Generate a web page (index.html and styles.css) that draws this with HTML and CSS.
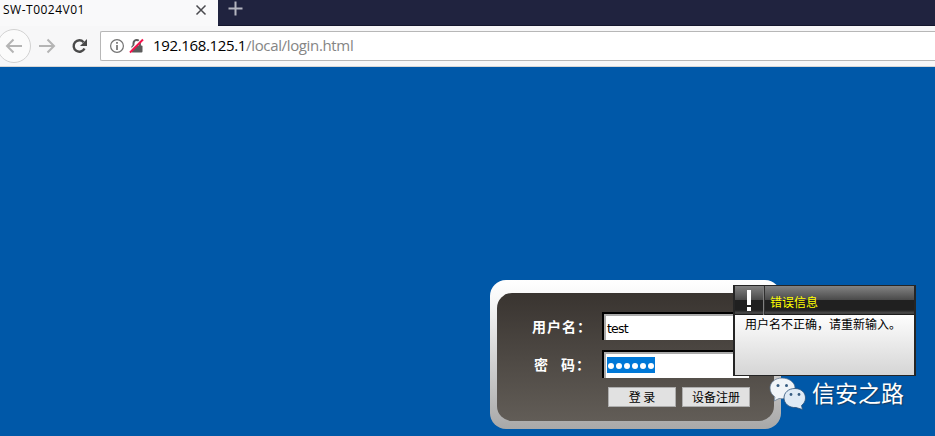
FILE: index.html
```html
<!DOCTYPE html>
<html lang="zh-CN">
<head>
<meta charset="utf-8">
<title>SW-T0024V01</title>
<link rel="stylesheet" href="styles.css">
</head>
<body>
<header class="tabs">
  <div class="tab"><span class="tab-title">SW-T0024V01</span>
    <svg class="close" width="12" height="12" viewBox="0 0 12 12"><path d="M1.500 1.500l9 9M10.500 1.500l-9 9" stroke="#4a4a4e" stroke-width="1.500"/></svg>
  </div>
  <svg class="plus" width="15" height="15" viewBox="0 0 15 15"><path d="M7.500 .5v14M.5 7.500h14" stroke="#b4b5bf" stroke-width="2"/></svg>
</header>
<nav class="toolbar">
  <svg class="nav-icons" width="100" height="40" viewBox="0 0 100 40" fill="none">
    <circle cx="14" cy="20" r="16.500" fill="#fbfbfb" stroke="#d2d2d2"/>
    <path d="M22 20H7M13.500 13.500L7 20l6.500 6.500" stroke="#b4b4b4" stroke-width="2"/>
    <path d="M39 20h15M47.500 13.500L54 20l-6.500 6.500" stroke="#b4b4b4" stroke-width="2"/>
    <path d="M83.600 16.200A5.700 5.700 0 1 0 84.500 22.500" stroke="#4a4a4a" stroke-width="2.400"/>
    <path d="M87 13v7h-7z" fill="#4a4a4a"/>
  </svg>
  <div class="address">
    <svg width="37" height="18" viewBox="0 0 37 18" fill="none">
      <circle cx="8" cy="9" r="6.400" stroke="#737373" stroke-width="1.200"/>
      <path d="M8 8v5M8 5v1.700" stroke="#737373" stroke-width="1.700"/>
      <path d="M24.500 9V6.300a3.200 3.200 0 0 1 6.400 0V9" stroke="#5c5c5c" stroke-width="2"/>
      <rect x="22.500" y="8.500" width="11" height="7" rx="1" fill="#5c5c5c"/>
      <path d="M20 14.500L32.500 2" stroke="#fff" stroke-width="1.500"/>
      <path d="M21 15.500L34 2.500" stroke="#f5134c" stroke-width="2"/>
    </svg>
    <span class="url"><b>192.168.125.1</b>/local/login.html</span>
  </div>
</nav>
<main class="page">
  <section class="panel">
    <form class="login">
      <div class="row"><span class="label">用户名：</span><div class="field"><span>test</span></div></div>
      <div class="row"><span class="label pass">密<i></i>码：</span><div class="field"><span class="selected"><svg width="48" height="16" viewBox="0 0 48 16" fill="#fff"><circle cx="4" cy="9" r="3"/><circle cx="12" cy="9" r="3"/><circle cx="20" cy="9" r="3"/><circle cx="28" cy="9" r="3"/><circle cx="36" cy="9" r="3"/><circle cx="44" cy="9" r="3"/></svg></span></div></div>
      <div class="actions"><button type="button">登 录</button><button type="button">设备注册</button></div>
    </form>
  </section>
  <aside class="alert">
    <div class="alert-head"><div class="alert-icon"><svg width="4" height="21" viewBox="0 0 4 21" fill="#fff"><path d="M0 0h4v15H0zM0 17h4v4H0z"/></svg></div><div class="alert-title">错误信息</div></div>
    <div class="alert-body">用户名不正确，请重新输入。</div>
  </aside>
  <div class="watermark">
    <svg width="38" height="34" viewBox="0 0 38 34">
      <path d="M13 1C6 1 1 5.500 1 11c0 4 2 7 5 9l-1 4 5-2.500c9 1.500 16-3.500 16-10.500C26 5.500 20 1 13 1z" fill="#f0f4f8" stroke="#57708b" stroke-width=".7"/>
      <path d="M26 11.500c-6.500 0-11 4-11 9.500s5 10 12 9.500l6.500 2-1-4c2.500-2 4-4.500 4-7.500 0-5.500-4.500-9.500-10.500-9.500z" fill="#dfeaf5" stroke="#284f77" stroke-width=".8"/>
      <g fill="#375d82"><circle cx="9" cy="8.500" r="1.500"/><circle cx="17.500" cy="8.500" r="1.500"/><circle cx="22" cy="17.500" r="1.400"/><circle cx="30" cy="17.500" r="1.400"/></g>
    </svg>
    <span>信安之路</span>
  </div>
</main>
</body>
</html>
```
FILE: styles.css
```css
* { box-sizing: border-box; }
body { margin: 0; width: 935px; height: 436px; overflow: hidden; display: flex; flex-direction: column; font-family: "Noto Sans", "Noto Sans CJK SC", sans-serif; font-size: 12px; }
svg { display: block; flex: none; }
.tabs { height: 26px; display: flex; background: #20233f; border-bottom: 1px solid #14162d; }
.tab { width: 218px; height: 26px; background: #f9f9fa; display: flex; justify-content: space-between; padding: 0 11px 0 3px; }
.tab-title { font-family: "Open Sans", sans-serif; line-height: 19px; letter-spacing: .5px; color: #000; }
.close { margin-top: 4px; }
.plus { margin: 1px 0 0 10px; }
.toolbar { height: 41px; display: flex; background: #f7f7f8; border-bottom: 1px solid #d6d6d6; }
.nav-icons { flex: none; }
.address { flex: 1; height: 30px; margin-top: 5px; border: 1px solid #b7b7b7; border-right: 0; border-radius: 2px 0 0 2px; background: #fff; display: flex; align-items: center; padding-left: 8px; }
.url { margin: -2px 0 0 7px; font-family: "Open Sans", sans-serif; font-size: 15px; line-height: 20px; letter-spacing: -.35px; color: #858585; white-space: nowrap; }
.url b { color: #000; font-weight: 400; }
.page { flex: 1; position: relative; background: #0058a8; padding: 213px 0 0 490px; }
.panel { width: 291px; height: 149px; border-radius: 16px; background: linear-gradient(#fff, #f6f6f6 15%, #a8a8a8); padding: 13px 7px 8px; }
.login { height: 128px; border-radius: 15px; background: linear-gradient(#393430, #625d57); padding: 19px 0 0 35px; }
.row { display: flex; height: 38px; }
.label { width: 70px; color: #fff; font-size: 14px; font-weight: 600; line-height: 29px; letter-spacing: 1px; white-space: nowrap; }
.pass { padding-left: 2px; }
.pass i { display: inline-block; width: 12px; }
.field { width: 147px; height: 28px; background: #fff; border: 2px solid #000; border-right: 0; border-bottom: 0; box-shadow: inset 2px 2px #aaa; padding: 6px 0 0 3px; font: 12.500px/18px "DejaVu Sans", sans-serif; letter-spacing: -.8px; color: #000; }
.selected { display: block; width: 48px; height: 16px; margin-top: -1px; background: #0078d7; }
.actions { display: flex; gap: 6px; padding-left: 76px; margin-top: -1px; }
button { width: 68px; height: 20px; padding: 0; border: 1px solid #adadad; background: #e1e1e1; color: #000; font: 12px/18px "Noto Sans CJK SC", sans-serif; }
.alert { position: absolute; left: 733px; top: 218px; width: 183px; height: 91px; border: 2px solid #252525; border-width: 1px 2px 1px 2px; background: linear-gradient(#fff 30%, #d5d5d5); }
.alert-head { height: 29px; display: flex; background: linear-gradient(#838383, #4b4b4b 47%, #202020 50%, #202020 83%, #505050 94%, #1c1c1c 97%); }
.alert-icon { width: 29px; border-right: 1px solid #808080; display: flex; justify-content: center; padding-top: 4px; }
.alert-title { color: #ff0; padding-left: 5px; line-height: 33px; border-left: 1px solid #303030; }
.alert-body { padding-left: 10px; line-height: 20px; color: #000; white-space: nowrap; }
.watermark { position: absolute; left: 769px; top: 310px; display: flex; color: #fff; font-size: 23px; line-height: 34px; text-shadow: 1px 1px 1px #173d63; }
.watermark span { margin: -1px 0 0 5px; }
```
